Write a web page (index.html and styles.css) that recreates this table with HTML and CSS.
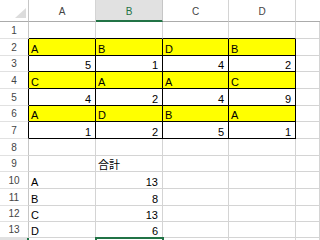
FILE: index.html
```html
<!DOCTYPE html>
<html>
<head>
<meta charset="utf-8">
<link rel="stylesheet" href="styles.css">
</head>
<body>
<div class="sheet">
  <div class="corner"><svg class="tri" width="28" height="21" viewBox="0 0 28 21"><polygon points="26,8 26,18 15,18" fill="#dcdcdc"/></svg></div>
  <div class="h">A</div><div class="h hs">B</div><div class="h">C</div><div class="h">D</div><div class="h he"></div>

  <div class="rh">1</div><div class="c kb"></div><div class="c kb"></div><div class="c kb"></div><div class="c kb"></div><div class="c"></div>

  <div class="rh rk">2</div><div class="c k y">A</div><div class="c k y">B</div><div class="c k y">D</div><div class="c k y">B</div><div class="c"></div>
  <div class="rh rk">3</div><div class="c k n">5</div><div class="c k n">1</div><div class="c k n">4</div><div class="c k n">2</div><div class="c"></div>
  <div class="rh rk">4</div><div class="c k y">C</div><div class="c k y">A</div><div class="c k y">A</div><div class="c k y">C</div><div class="c"></div>
  <div class="rh rk">5</div><div class="c k n">4</div><div class="c k n">2</div><div class="c k n">4</div><div class="c k n">9</div><div class="c"></div>
  <div class="rh rk">6</div><div class="c k y">A</div><div class="c k y">D</div><div class="c k y">B</div><div class="c k y">A</div><div class="c"></div>
  <div class="rh rk">7</div><div class="c k n">1</div><div class="c k n">2</div><div class="c k n">5</div><div class="c k n">1</div><div class="c"></div>

  <div class="rh">8</div><div class="c"></div><div class="c"></div><div class="c"></div><div class="c"></div><div class="c"></div>
  <div class="rh">9</div><div class="c"></div><div class="c">合計</div><div class="c"></div><div class="c"></div><div class="c"></div>
  <div class="rh">10</div><div class="c">A</div><div class="c n">13</div><div class="c"></div><div class="c"></div><div class="c"></div>
  <div class="rh">11</div><div class="c">B</div><div class="c n">8</div><div class="c"></div><div class="c"></div><div class="c"></div>
  <div class="rh">12</div><div class="c">C</div><div class="c n">13</div><div class="c"></div><div class="c"></div><div class="c"></div>
  <div class="rh">13</div><div class="c">D</div><div class="c n">6</div><div class="c"></div><div class="c"></div><div class="c"></div>
  <div class="rh rs"></div><div class="c"></div><div class="c sel"></div><div class="c"></div><div class="c"></div><div class="c"></div>
</div>
</body>
</html>
```

FILE: styles.css
```css
html, body {
  margin: 0;
  padding: 0;
  background: #ffffff;
  overflow: hidden;
}

.sheet {
  width: 320px;
  height: 240px;
  display: grid;
  grid-template-columns: 29px 67px 67px 66px 67px 1fr;
  grid-template-rows: 22px 17px 17px 16px 17px 17px 16px 17px 17px 16px 17px 17px 16px 16px 1fr;
  font-family: "Liberation Sans", "Noto Sans CJK JP", sans-serif;
  overflow: hidden;
}

.corner {
  border-right: 1px solid #c6c6c6;
  border-bottom: 1px solid #ababab;
  background: #ffffff;
}

.tri {
  display: block;
}

.h {
  display: flex;
  align-items: flex-end;
  justify-content: center;
  padding-bottom: 4px;
  box-sizing: border-box;
  font-size: 10px;
  line-height: 10px;
  color: #444444;
  background: #ffffff;
  border-right: 1px solid #d4d4d4;
  border-bottom: 1px solid #ababab;
}

.hs {
  background: #e1e1e1;
  color: #217346;
  border-right-color: #c6c6c6;
  border-bottom: 2px solid #217346;
  padding-bottom: 3px;
}

.he {
  border-right: none;
}

.rh {
  display: flex;
  align-items: flex-end;
  justify-content: center;
  padding-bottom: 2px;
  box-sizing: border-box;
  font-size: 10px;
  line-height: 10px;
  color: #444444;
  background: #ffffff;
  border-right: 1px solid #c6c6c6;
  border-bottom: 1px solid #e1e1e1;
}

.rk {
  border-right-color: #000000;
}

.rs {
  background: #e1e1e1;
  border-right: 2px solid #217346;
}

.c {
  display: flex;
  align-items: flex-end;
  justify-content: flex-start;
  box-sizing: border-box;
  padding: 0 4px 0 2px;
  font-size: 11px;
  line-height: 11px;
  color: #000000;
  white-space: nowrap;
  border-right: 1px solid #d4d4d4;
  border-bottom: 1px solid #d4d4d4;
}

.n {
  justify-content: flex-end;
}

.k {
  border-right-color: #000000;
  border-bottom-color: #000000;
}

.kb {
  border-bottom-color: #000000;
}

.y {
  background: #ffff00;
}

.sel {
  outline: 2px solid #217346;
  outline-offset: -1px;
}
```
